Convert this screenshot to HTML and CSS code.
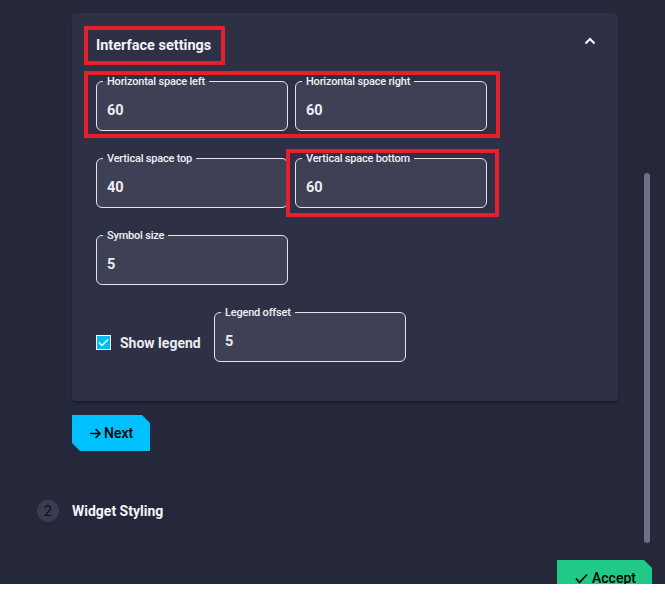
FILE: index.html
```html
<!DOCTYPE html>
<html>
<head>
<meta charset="utf-8">
<link rel="stylesheet" href="styles.css">
</head>
<body>
<div class="app">
  <div class="content">
    <div class="card">
      <div class="card-head">
        <div class="title-box">Interface settings</div>
        <svg class="chevron" width="12" height="8" viewBox="0 0 12 8"><polyline points="1.5,6.5 6,2 10.5,6.5" fill="none" stroke="#fff" stroke-width="2"/></svg>
      </div>
      <div class="rows">
        <div class="row hl hl-row">
          <div class="field"><span class="label">Horizontal space left</span><span class="value">60</span></div>
          <div class="field"><span class="label">Horizontal space right</span><span class="value">60</span></div>
        </div>
        <div class="row">
          <div class="field"><span class="label">Vertical space top</span><span class="value">40</span></div>
          <div class="field hl hl-field"><span class="label">Vertical space bottom</span><span class="value">60</span></div>
        </div>
        <div class="row">
          <div class="field"><span class="label">Symbol size</span><span class="value">5</span></div>
        </div>
        <div class="row">
          <label class="check">
            <span class="box"><svg width="11" height="9" viewBox="0 0 11 9"><polyline points="1,4.5 4,7.5 10,1.5" fill="none" stroke="#fff" stroke-width="1.4"/></svg></span>
            <span class="check-text">Show legend</span>
          </label>
          <div class="field"><span class="label">Legend offset</span><span class="value">5</span></div>
        </div>
      </div>
    </div>
    <button class="btn-next"><svg width="13" height="12" viewBox="0 0 13 12"><path d="M1 6.5H11M6.5 2L11 6.5L6.5 11" fill="none" stroke="#000" stroke-width="1.6"/></svg>Next</button>
  </div>
  <div class="step">
    <span class="step-num">2</span>
    <span class="step-title">Widget Styling</span>
  </div>
  <div class="footer">
    <button class="btn-accept"><svg width="13" height="11" viewBox="0 0 13 11"><polyline points="1,5.5 4.5,9.5 12,1.5" fill="none" stroke="#000" stroke-width="1.6"/></svg>Accept</button>
  </div>
  <div class="scrollbar"></div>
</div>
</body>
</html>
```

FILE: styles.css
```css
* { box-sizing: border-box; }
html, body { margin: 0; padding: 0; background: #ffffff; }
body { font-family: Roboto, "Liberation Sans", Arial, sans-serif; }

.app {
  position: relative;
  height: 584px;
  overflow: hidden;
  background: #25273b;
  padding-top: 13px;
}

.content {
  margin-left: 72px;
  width: 546px;
}

.card {
  background: #2e3045;
  border-radius: 4px;
  padding: 13px 0 39px 0;
  box-shadow: 0 2px 2px rgba(0,0,0,0.25);
}

.card-head {
  display: flex;
  justify-content: space-between;
  align-items: flex-start;
  padding: 0 22px 0 12px;
}

.title-box {
  border: 4px solid #e5202a;
  width: 141px;
  height: 39px;
  line-height: 31px;
  padding: 0 0 0 8px;
  color: #f2f2f6;
  font-weight: 700;
  font-size: 14.5px;
  white-space: nowrap;
}

.chevron { margin-top: 11px; display: block; }

.rows {
  display: flex;
  flex-direction: column;
  gap: 27px;
  padding-left: 24px;
  margin-top: 16px;
}

.row {
  display: flex;
  gap: 7px;
  align-items: center;
}

.hl { position: relative; }
.hl::after {
  content: "";
  position: absolute;
  border: 4px solid #e5202a;
  pointer-events: none;
  z-index: 2;
}
.hl-row { align-self: flex-start; }
.hl-row::after { top: -10px; left: -12px; right: -13px; bottom: -7px; }
.hl-field::after { top: -10px; left: -10px; right: -13px; bottom: -10px; }

.field {
  position: relative;
  width: 192px;
  height: 50px;
  border: 1px solid #e4e4ea;
  border-radius: 6px;
  background: #3e4056;
  display: flex;
  align-items: center;
  padding: 9px 0 0 10px;
}

.label {
  position: absolute;
  top: -7px;
  left: 6px;
  padding: 0 4px;
  font-size: 11px;
  line-height: 13px;
  font-weight: 500;
  letter-spacing: -0.2px;
  color: #f0f0f4;
  background: linear-gradient(to bottom, #2e3045 0, #2e3045 50%, #3e4056 50%, #3e4056 100%);
}

.value {
  font-size: 14.5px;
  font-weight: 700;
  color: #ececf2;
}

.check {
  width: 111px;
  display: flex;
  align-items: center;
  gap: 9px;
  padding-top: 11px;
}

.box {
  width: 15px;
  height: 15px;
  border: 1px solid #ffffff;
  background: #00bdf2;
  display: flex;
  align-items: center;
  justify-content: center;
}

.check-text {
  font-size: 14px;
  font-weight: 700;
  color: #ececf2;
  white-space: nowrap;
}

.btn-next {
  margin-top: 14px;
  width: 78px;
  height: 36px;
  border: 0;
  background: #00c0ff;
  clip-path: polygon(0 0, 70px 0, 78px 8px, 78px 36px, 8px 36px, 0 28px);
  display: flex;
  align-items: center;
  gap: 2px;
  padding: 0 0 0 17px;
  font-family: Roboto, "Liberation Sans", Arial, sans-serif;
  font-size: 14px;
  font-weight: 500;
  color: #000;
}

.step {
  display: flex;
  align-items: center;
  gap: 13px;
  margin: 49px 0 0 37px;
}

.step-num {
  width: 22px;
  height: 22px;
  border-radius: 50%;
  background: #3a3c51;
  color: #0c0d16;
  font-size: 14px;
  display: flex;
  align-items: center;
  justify-content: center;
}

.step-title {
  font-size: 14px;
  font-weight: 700;
  color: #f4f4f8;
}

.footer {
  display: flex;
  justify-content: flex-end;
  margin-top: 38px;
  padding-right: 13px;
}

.btn-accept {
  width: 95px;
  height: 36px;
  border: 0;
  background: #20c986;
  clip-path: polygon(0 0, 87px 0, 95px 8px, 95px 36px, 0 36px);
  display: flex;
  align-items: flex-start;
  gap: 4px;
  padding: 10px 0 0 18px;
  font-family: Roboto, "Liberation Sans", Arial, sans-serif;
  font-size: 14px;
  font-weight: 500;
  color: #000;
}
.btn-accept svg { margin-top: 3px; }

.scrollbar {
  position: absolute;
  left: 644px;
  top: 173px;
  width: 6px;
  height: 370px;
  border-radius: 3px;
  background: #6f7187;
}
```
